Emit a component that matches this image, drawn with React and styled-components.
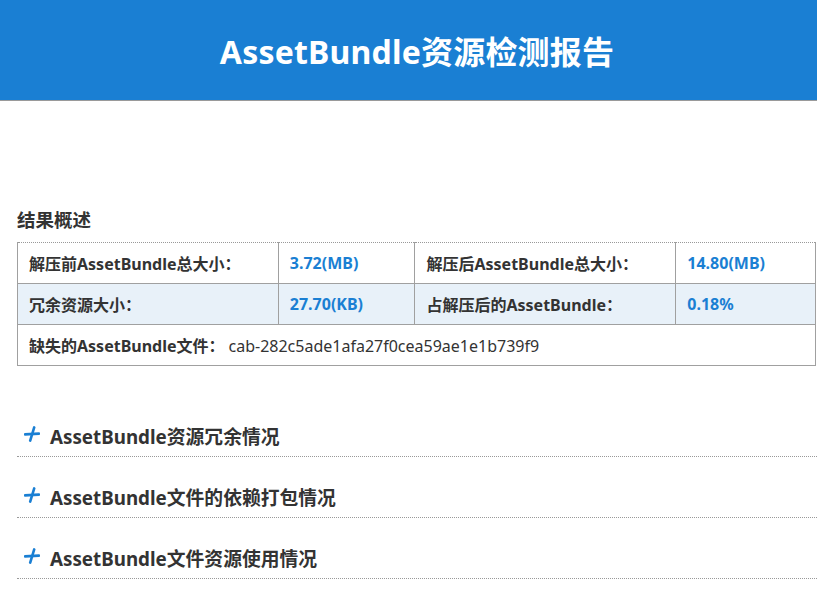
import React from "react";
import styled, { createGlobalStyle } from "styled-components";

const GlobalStyle = createGlobalStyle`
  body {
    margin: 0;
    background: #fff;
    font-family: "Noto Sans", "Noto Sans CJK SC", sans-serif;
    color: #333;
    overflow: hidden;
  }
`;

const Banner = styled.header`
  height: 100px;
  padding-left: 17px;
  background: #1a7fd3;
  border-bottom: 1px solid #9a9a9a;
  display: flex;
  align-items: center;
  justify-content: center;
`;

const Title = styled.h1`
  margin: 0;
  color: #fff;
  font-size: 32px;
  font-weight: 700;
  letter-spacing: 0.2px;
`;

const Content = styled.main`
  padding: 107px 0 0 17px;
  width: 820px;
`;

const SectionTitle = styled.h2`
  margin: 0 0 10px;
  font-size: 18.5px;
  line-height: 24px;
  font-weight: 700;
  color: #333;
`;

const Table = styled.table`
  width: 799px;
  border-collapse: collapse;
  border-top: 1px dotted #999;
  font-size: 16px;
`;

const Row = styled.tr`
  background: ${(p) => (p.$shaded ? "#e8f1f9" : "#fff")};
`;

const Cell = styled.td`
  height: 40px;
  padding: 0 11px;
  border: 1px solid #a0a0a0;
  border-top: ${(p) => (p.$first ? "1px dotted #999" : "1px solid #a0a0a0")};
  font-weight: 700;
  color: ${(p) => (p.$value ? "#1a7fd3" : "#333")};
  white-space: nowrap;
`;

const Plain = styled.span`
  font-weight: 400;
  margin-left: 4px;
`;

const Panels = styled.section`
  margin-top: 50px;
  display: flex;
  flex-direction: column;
  gap: 20px;
`;

const Panel = styled.div`
  height: 40px;
  display: flex;
  align-items: center;
  gap: 10px;
  padding-left: 7px;
  border-bottom: 1px dotted #999;
  font-size: 18.8px;
  font-weight: 700;
  color: #333;
`;

const Plus = () => (
  <svg width="16" height="16" viewBox="0 0 16 16" style={{ marginTop: -4 }}>
    <path d="M1 8.4 L15 7.6" stroke="#1a7fd3" strokeWidth="2.6" strokeLinecap="round" />
    <path d="M10.2 1.4 L6.2 14.6" stroke="#1a7fd3" strokeWidth="2.6" strokeLinecap="round" />
  </svg>
);

const panels = [
  "AssetBundle资源冗余情况",
  "AssetBundle文件的依赖打包情况",
  "AssetBundle文件资源使用情况",
];

export default function App() {
  return (
    <>
      <GlobalStyle />
      <Banner>
        <Title>AssetBundle资源检测报告</Title>
      </Banner>
      <Content>
        <SectionTitle>结果概述</SectionTitle>
        <Table>
          <colgroup>
            <col style={{ width: 261 }} />
            <col style={{ width: 137 }} />
            <col style={{ width: 261 }} />
            <col style={{ width: 140 }} />
          </colgroup>
          <tbody>
            <Row>
              <Cell $first>解压前AssetBundle总大小：</Cell>
              <Cell $first $value>3.72(MB)</Cell>
              <Cell $first>解压后AssetBundle总大小：</Cell>
              <Cell $first $value>14.80(MB)</Cell>
            </Row>
            <Row $shaded>
              <Cell>冗余资源大小：</Cell>
              <Cell $value>27.70(KB)</Cell>
              <Cell>占解压后的AssetBundle：</Cell>
              <Cell $value>0.18%</Cell>
            </Row>
            <Row>
              <Cell colSpan={4}>
                缺失的AssetBundle文件：<Plain>cab-282c5ade1afa27f0cea59ae1e1b739f9</Plain>
              </Cell>
            </Row>
          </tbody>
        </Table>
        <Panels>
          {panels.map((t) => (
            <Panel key={t}>
              <Plus />
              {t}
            </Panel>
          ))}
        </Panels>
      </Content>
    </>
  );
}
